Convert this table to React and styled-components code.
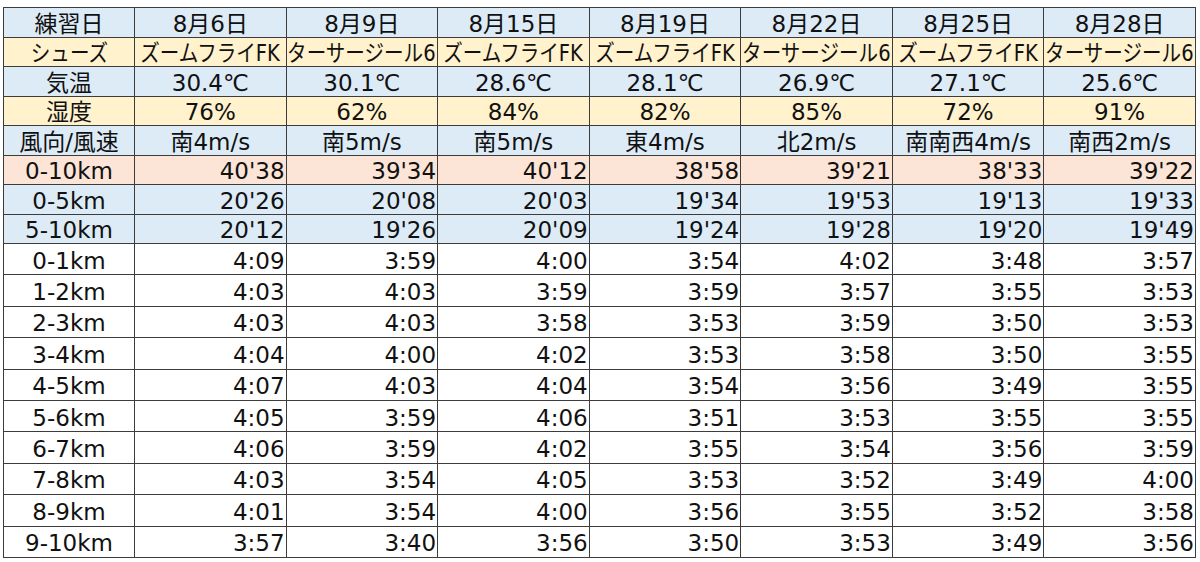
import React from "react";
import styled, { createGlobalStyle } from "styled-components";

const GlobalStyle = createGlobalStyle`
  html, body {
    margin: 0;
    padding: 0;
    background: #ffffff;
  }
`;

const Page = styled.div`
  padding: 7px 0 0 3px;
  width: 1200px;
  height: 562px;
  box-sizing: border-box;
  overflow: hidden;
  font-family: "DejaVu Sans", "Noto Sans CJK JP", sans-serif;
  color: #111;
`;

const Sheet = styled.div`
  display: grid;
  grid-template-columns: 131px repeat(7, 151.57px);
  grid-template-rows: repeat(8, 29.5px) repeat(10, 31.4px);
  width: 1192px;
  border-top: 1px solid #3c3c3c;
  border-left: 1px solid #3c3c3c;
`;

const Cell = styled.div`
  box-sizing: border-box;
  display: flex;
  align-items: center;
  justify-content: ${(p) => (p.$align === "right" ? "flex-end" : "center")};
  border-right: 1px solid #3c3c3c;
  border-bottom: 1px solid #3c3c3c;
  background: ${(p) => p.$bg || "#ffffff"};
  padding: 3px ${(p) => (p.$align === "right" ? "1px" : "0")} 0 0;
  font-size: 23px;
  line-height: 24px;
  white-space: nowrap;
  overflow: hidden;
`;

const Condensed = styled.span`
  display: inline-block;
  flex: none;
  transform: scaleX(0.85);
  transform-origin: center;
`;

const BLUE = "#ddebf7";
const YELLOW = "#fff2cc";
const PEACH = "#fce4d6";

const rows = [
  { label: "練習日", bg: BLUE, values: ["8月6日", "8月9日", "8月15日", "8月19日", "8月22日", "8月25日", "8月28日"] },
  {
    label: "シューズ",
    bg: YELLOW,
    condensed: true,
    values: ["ズームフライFK", "ターサージール6", "ズームフライFK", "ズームフライFK", "ターサージール6", "ズームフライFK", "ターサージール6"],
  },
  { label: "気温", bg: BLUE, values: ["30.4℃", "30.1℃", "28.6℃", "28.1℃", "26.9℃", "27.1℃", "25.6℃"] },
  { label: "湿度", bg: YELLOW, values: ["76%", "62%", "84%", "82%", "85%", "72%", "91%"] },
  { label: "風向/風速", bg: BLUE, values: ["南4m/s", "南5m/s", "南5m/s", "東4m/s", "北2m/s", "南南西4m/s", "南西2m/s"] },
  { label: "0-10km", bg: PEACH, align: "right", values: ["40'38", "39'34", "40'12", "38'58", "39'21", "38'33", "39'22"] },
  { label: "0-5km", bg: BLUE, align: "right", values: ["20'26", "20'08", "20'03", "19'34", "19'53", "19'13", "19'33"] },
  { label: "5-10km", bg: BLUE, align: "right", values: ["20'12", "19'26", "20'09", "19'24", "19'28", "19'20", "19'49"] },
  { label: "0-1km", align: "right", values: ["4:09", "3:59", "4:00", "3:54", "4:02", "3:48", "3:57"] },
  { label: "1-2km", align: "right", values: ["4:03", "4:03", "3:59", "3:59", "3:57", "3:55", "3:53"] },
  { label: "2-3km", align: "right", values: ["4:03", "4:03", "3:58", "3:53", "3:59", "3:50", "3:53"] },
  { label: "3-4km", align: "right", values: ["4:04", "4:00", "4:02", "3:53", "3:58", "3:50", "3:55"] },
  { label: "4-5km", align: "right", values: ["4:07", "4:03", "4:04", "3:54", "3:56", "3:49", "3:55"] },
  { label: "5-6km", align: "right", values: ["4:05", "3:59", "4:06", "3:51", "3:53", "3:55", "3:55"] },
  { label: "6-7km", align: "right", values: ["4:06", "3:59", "4:02", "3:55", "3:54", "3:56", "3:59"] },
  { label: "7-8km", align: "right", values: ["4:03", "3:54", "4:05", "3:53", "3:52", "3:49", "4:00"] },
  { label: "8-9km", align: "right", values: ["4:01", "3:54", "4:00", "3:56", "3:55", "3:52", "3:58"] },
  { label: "9-10km", align: "right", values: ["3:57", "3:40", "3:56", "3:50", "3:53", "3:49", "3:56"] },
];

export default function App() {
  return (
    <Page>
      <GlobalStyle />
      <Sheet>
        {rows.map((row) => (
          <React.Fragment key={row.label}>
            <Cell $bg={row.bg}>
              {row.condensed ? <Condensed>{row.label}</Condensed> : row.label}
            </Cell>
            {row.values.map((v, i) => (
              <Cell key={i} $bg={row.bg} $align={row.align}>
                {row.condensed ? <Condensed>{v}</Condensed> : v}
              </Cell>
            ))}
          </React.Fragment>
        ))}
      </Sheet>
    </Page>
  );
}
